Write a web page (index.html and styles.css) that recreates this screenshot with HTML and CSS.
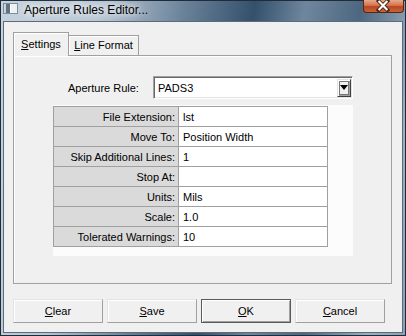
FILE: index.html
```html
<!DOCTYPE html>
<html lang="en">
<head>
    <meta charset="UTF-8">
    <title>Aperture Rules Editor...</title>
    <link rel="stylesheet" href="styles.css">
</head>
<body>

    <div class="window">
        <div class="titlebar">
            <svg class="app-icon" width="15" height="11" viewBox="0 0 15 11">
                <rect x="0.5" y="0.5" width="14" height="10" fill="#eef1f4" stroke="#7d8c9b"/>
                <rect x="1" y="1" width="2" height="9" fill="#c9d2db"/>
                <rect x="3" y="1" width="4" height="9" fill="#5f7287"/>
                <rect x="7" y="1" width="1" height="9" fill="#ffffff"/>
            </svg>
            <span class="title">Aperture Rules Editor...</span>
            <div class="close">
                <svg width="41" height="13" viewBox="0 0 41 13">
                    <path d="M16 2 L25 11 M25 2 L16 11" stroke="#4a2416" stroke-width="4" stroke-linecap="square"/>
                    <path d="M16 2 L25 11 M25 2 L16 11" stroke="#ffffff" stroke-width="2.2"/>
                </svg>
            </div>
        </div>

        <div class="client">
            <div class="tabs">
                <div class="tab active"><u>S</u>ettings</div>
                <div class="tab"><u>L</u>ine Format</div>
            </div>

            <div class="panel">
                <div class="rule-row">
                    <label class="rule-label">Aperture Rule:</label>
                    <div class="combo">
                        <span class="combo-text">PADS3</span>
                        <div class="drop">
                            <svg width="12" height="16" viewBox="0 0 12 16">
                                <rect x="1.5" y="1.5" width="9" height="13" fill="none" stroke="#000" stroke-dasharray="1 1"/>
                                <path d="M2 5 H10 L6 10 Z" fill="#000"/>
                            </svg>
                        </div>
                    </div>
                </div>

                <div class="grid-box">
                    <table class="props">
                        <tr><th>File Extension:</th><td>lst</td></tr>
                        <tr><th>Move To:</th><td>Position Width</td></tr>
                        <tr><th>Skip Additional Lines:</th><td>1</td></tr>
                        <tr><th>Stop At:</th><td></td></tr>
                        <tr><th>Units:</th><td>Mils</td></tr>
                        <tr><th>Scale:</th><td>1.0</td></tr>
                        <tr><th>Tolerated Warnings:</th><td>10</td></tr>
                    </table>
                </div>
            </div>

            <div class="buttons">
                <div class="btn"><u>C</u>lear</div>
                <div class="btn"><u>S</u>ave</div>
                <div class="btn default"><u>O</u>K</div>
                <div class="btn"><u>C</u>ancel</div>
            </div>
        </div>
    </div>

</body>
</html>
```

FILE: styles.css
```css
body {
    margin: 0;
    font-family: "Liberation Sans", Arial, sans-serif;
    font-size: 11px;
    color: #000;
}
.window {
    width: 406px;
    height: 336px;
    box-sizing: border-box;
    border: 1px solid #1f2c39;
    display: flex;
    flex-direction: column;
    background: linear-gradient(100deg, #c6d2dd 0%, #b8c6d3 22%, #6a8299 40%, #34506b 55%, #6f879e 66%, #4d6780 78%, #9db0c0 92%, #8da0b3 100%);
}
.titlebar {
    height: 20px;
    display: flex;
    align-items: flex-start;
}
.app-icon {
    margin: 2px 0 0 2px;
}
.title {
    margin: 2px 0 0 6px;
    font-size: 12px;
    line-height: 14px;
    text-shadow: 0 0 6px #fff, 0 0 10px #fff;
}
.close {
    margin: -1px 1px 0 auto;
    width: 41px;
    height: 13px;
    box-sizing: border-box;
    border: 1px solid #5a2613;
    border-top: none;
    border-radius: 0 0 4px 4px;
    background: linear-gradient(#e8a888, #d27550 45%, #b9461f 55%, #c9643c);
    display: flex;
}
.close svg {
    margin: -1px 0 0 -1px;
}
.client {
    flex: 1;
    margin: 0 2px 2px;
    border: 1px solid #5b6b7b;
    background: #f0f0f0;
    padding: 11px 10px 9px 9px;
    display: flex;
    flex-direction: column;
}
.tabs {
    display: flex;
    align-items: flex-end;
    height: 22px;
}
.tab {
    box-sizing: border-box;
    height: 20px;
    padding: 3px 0 0 0;
    text-align: center;
    border: 1px solid #a0a0a0;
    border-bottom: none;
    box-shadow: inset 1px 1px #fff;
    background: #f0f0f0;
}
.tab:nth-child(2) {
    width: 70px;
    border-left: none;
}
.tab.active {
    width: 56px;
    height: 24px;
    margin-bottom: -1px;
    padding-top: 5px;
    position: relative;
    z-index: 1;
}
.panel {
    flex: 1;
    border: 1px solid #a0a0a0;
    box-shadow: inset 1px 1px #fff;
    padding: 20px 0 0 0;
}
.rule-row {
    display: flex;
    align-items: center;
    margin-left: 54px;
}
.rule-label {
    width: 85px;
}
.combo {
    width: 200px;
    height: 23px;
    box-sizing: border-box;
    border: 1px solid;
    border-color: #a0a0a0 #fff #fff #a0a0a0;
    box-shadow: inset 1px 1px #696969, inset -1px -1px #e3e3e3;
    background: #fff;
    display: flex;
    align-items: center;
    padding: 0 1px 0 4px;
}
.combo-text {
    flex: 1;
}
.drop {
    width: 14px;
    height: 18px;
    box-sizing: border-box;
    border: 1px solid;
    border-color: #e3e3e3 #404040 #404040 #e3e3e3;
    box-shadow: inset 1px 1px #fff, inset -1px -1px #a0a0a0;
    background: #f0f0f0;
    display: flex;
}
.grid-box {
    margin: 6px 0 0 39px;
    width: 300px;
    height: 151px;
    box-sizing: border-box;
    padding-top: 1px;
    background: #fcfcfc;
}
.props {
    border-collapse: collapse;
    width: 275px;
}
.props th, .props td {
    height: 19px;
    padding: 0;
    border: 1px solid #a0a0a0;
    font-weight: normal;
    white-space: nowrap;
}
.props th {
    width: 121px;
    text-align: right;
    padding-right: 3px;
    background: #dadada;
}
.props td {
    padding-left: 4px;
    background: #fff;
}
.buttons {
    display: flex;
    gap: 4px;
    margin-top: 15px;
}
.btn {
    width: 90px;
    height: 24px;
    box-sizing: border-box;
    border: 1px solid;
    border-color: #e3e3e3 #a0a0a0 #a0a0a0 #e3e3e3;
    box-shadow: inset 1px 1px #fff;
    background: #f0f0f0;
    display: flex;
    align-items: center;
    justify-content: center;
}
.btn.default {
    border-color: #5a5a5a;
    box-shadow: inset 1px 1px #fff, inset -1px -1px #a0a0a0;
}
```
